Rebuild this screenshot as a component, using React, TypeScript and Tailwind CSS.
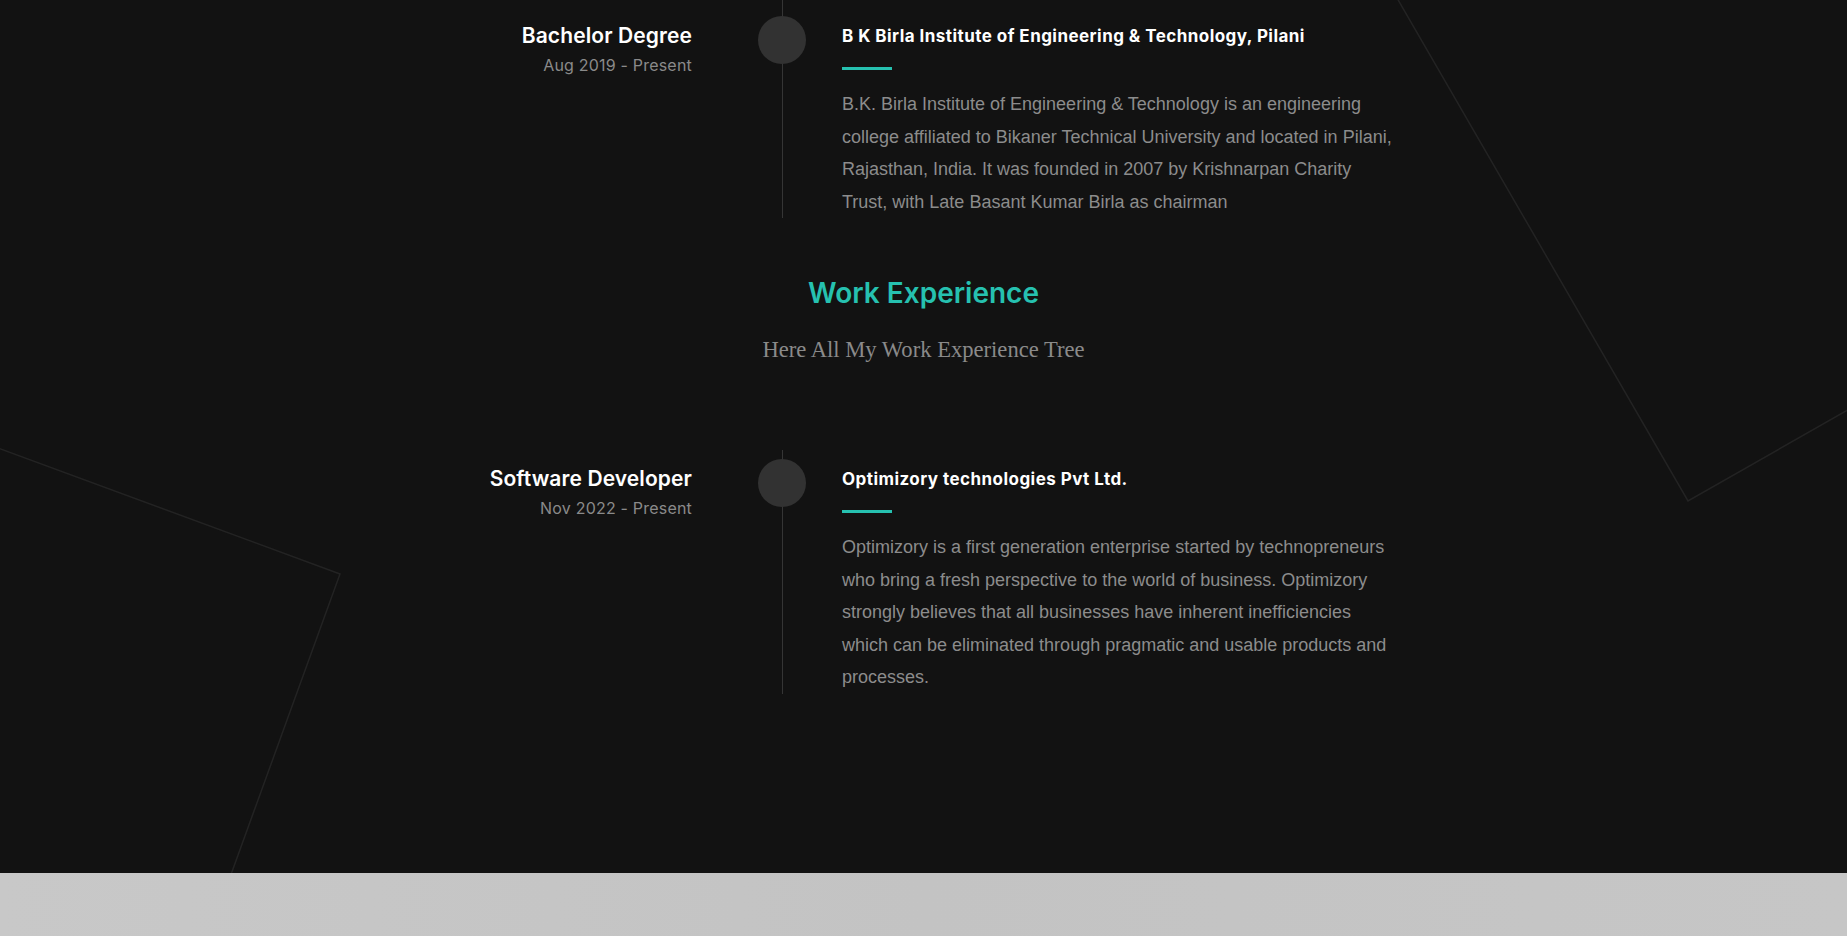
import React from "react";

type Item = {
  role: string;
  date: string;
  org: string;
  text: string;
};

const items: Item[] = [
  {
    role: "Bachelor Degree",
    date: "Aug 2019 - Present",
    org: "B K Birla Institute of Engineering & Technology, Pilani",
    text:
      "B.K. Birla Institute of Engineering & Technology is an engineering college affiliated to Bikaner Technical University and located in Pilani, Rajasthan, India. It was founded in 2007 by Krishnarpan Charity Trust, with Late Basant Kumar Birla as chairman",
  },
  {
    role: "Software Developer",
    date: "Nov 2022 - Present",
    org: "Optimizory technologies Pvt Ltd.",
    text:
      "Optimizory is a first generation enterprise started by technopreneurs who bring a fresh perspective to the world of business. Optimizory strongly believes that all businesses have inherent inefficiencies which can be eliminated through pragmatic and usable products and processes.",
  },
];

function TimelineItem({ item, top }: { item: Item; top: number }) {
  return (
    <div className="flex pl-[392px]">
      <div className="w-[300px] text-right" style={{ paddingTop: top }}>
        <h3 className="mt-[14px] text-[21px] leading-[30px] font-semibold text-white font-['Inter',sans-serif] tracking-[0.1px]">
          {item.role}
        </h3>
        <p className="mt-[2px] text-[16px] leading-[24px] text-[#8a8a8a] font-['Inter',sans-serif] tracking-[0.2px]">
          {item.date}
        </p>
      </div>
      <div className="relative ml-[66px] w-[48px]">
        <div className="absolute left-[24px] top-0 bottom-0 w-px bg-[#353535]" />
        <div
          className="relative h-[48px] w-[48px] rounded-full bg-[#323232]"
          style={{ marginTop: top + 9 }}
        />
      </div>
      <div className="ml-[36px] w-[555px]" style={{ paddingTop: top }}>
        <h4 className="mt-[17px] text-[17px] leading-[24px] font-bold text-white font-['Inter',sans-serif] tracking-[0.45px]">
          {item.org}
        </h4>
        <div className="mt-[19px] h-[3px] w-[50px] bg-[#26c1b0]" />
        <p className="mt-[18px] text-[18px] leading-[32.5px] text-[#8c8c8c] font-['Liberation_Sans',Arial,sans-serif]">
          {item.text}
        </p>
      </div>
    </div>
  );
}

export default function App() {
  return (
    <div className="w-full bg-[#121212]">
      <div className="relative h-[873px] overflow-hidden">
        <svg
          className="absolute inset-0 pointer-events-none"
          width="1847"
          height="873"
          viewBox="0 0 1847 873"
          fill="none"
        >
          <polyline
            points="1397,-2 1688,501 1860,403"
            stroke="#232323"
            strokeWidth="1.5"
          />
          <polyline
            points="-10,445 340,574 229,880"
            stroke="#232323"
            strokeWidth="1.5"
          />
        </svg>
        <div className="relative">
          <TimelineItem item={items[0]} top={7} />
          <div className="text-center">
            <h2 className="mt-[57px] text-[28px] leading-[36px] font-semibold text-[#26c1b0] font-['Inter',sans-serif]">
              Work Experience
            </h2>
            <p className="mt-[24px] text-[22.6px] leading-[30px] text-[#8a8a8a] font-['Liberation_Serif',serif]">
              Here All My Work Experience Tree
            </p>
          </div>
          <div className="mt-[85px]">
            <TimelineItem item={items[1]} top={0} />
          </div>
        </div>
      </div>
      <div className="h-[63px] bg-gradient-to-r from-[#c8c8c8] via-[#c3c3c3] to-[#c6c6c6]" />
    </div>
  );
}
